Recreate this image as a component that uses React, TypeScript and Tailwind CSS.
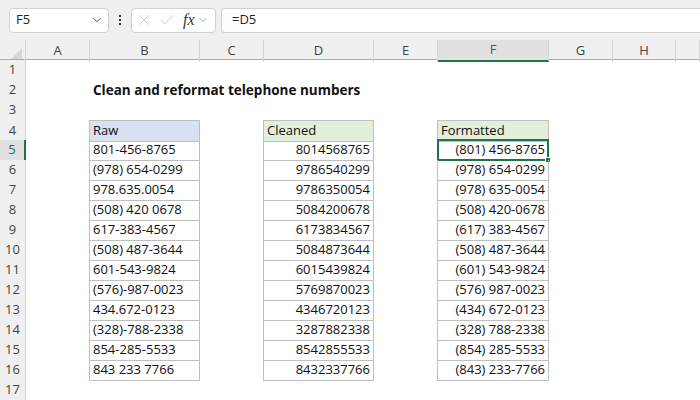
import type { ReactNode } from "react";
import { Check, ChevronDown, X } from "lucide-react";

const raw = [
  "801-456-8765",
  "(978) 654-0299",
  "978.635.0054",
  "(508) 420 0678",
  "617-383-4567",
  "(508) 487-3644",
  "601-543-9824",
  "(576)-987-0023",
  "434.672-0123",
  "(328)-788-2338",
  "854-285-5533",
  "843 233 7766",
];

const clean = (s: string) => s.replace(/\D/g, "");
const format = (s: string) => {
  const d = clean(s);
  return `(${d.slice(0, 3)}) ${d.slice(3, 6)}-${d.slice(6)}`;
};

const cols = ["A", "B", "C", "D", "E", "F", "G", "H", ""];
const gridCols =
  "grid grid-cols-[26px_64px_110px_64px_110px_64px_111px_64px_63px_1fr]";

function TableCell({
  row,
  value,
  align,
  head,
  children,
}: {
  row: number;
  value: string;
  align: "left" | "right";
  head: string;
  children?: ReactNode;
}) {
  const isHead = row === 4;
  return (
    <div
      className={`relative -ml-px flex items-center border-x border-b border-[#bfbfbf] px-[3px] ${
        isHead ? `border-t ${head}` : ""
      } ${align === "right" && !isHead ? "justify-end" : ""}`}
    >
      {value}
      {children}
    </div>
  );
}

export default function App() {
  const rows = Array.from({ length: 17 }, (_, i) => i + 1);
  return (
    <div className="h-[400px] w-[700px] overflow-hidden bg-white font-['Open_Sans',sans-serif] text-[13px] text-[#111]">
      {/* formula bar */}
      <div className="flex h-10 items-center bg-[#f0f0f0] pl-[9px]">
        <div className="flex h-[25px] w-[100px] items-center justify-between rounded-[4px] border border-[#d1d1d1] bg-white pl-[6px] pr-[4px] text-[#222]">
          <span>F5</span>
          <ChevronDown size={14} strokeWidth={1.6} className="text-[#444]" />
        </div>
        <div className="flex w-[22px] flex-col items-center gap-[2px]">
          <span className="h-[2px] w-[2px] bg-[#333]" />
          <span className="h-[2px] w-[2px] bg-[#333]" />
          <span className="h-[2px] w-[2px] bg-[#333]" />
        </div>
        <div className="flex h-[25px] w-[85px] items-center rounded-[4px] border border-[#d1d1d1] bg-white pl-[3px] text-[#c4c4c4]">
          <X size={18} strokeWidth={1.1} />
          <Check size={18} strokeWidth={1.1} className="ml-[5px]" />
          <span className="ml-[7px] font-['Liberation_Serif',serif] text-[16px] italic text-[#333]">
            fx
          </span>
          <ChevronDown size={12} strokeWidth={1.5} className="ml-[2px] text-[#888]" />
        </div>
        <div className="ml-[5px] flex h-[25px] flex-1 items-center rounded-l-[4px] border border-r-0 border-[#d1d1d1] bg-white pl-[10px] text-[#222]">
          =D5
        </div>
      </div>

      {/* column headers */}
      <div className={`${gridCols} h-5 border-b border-[#ababab] bg-[#f0f0f0] text-[#444]`}>
        <div className="relative border-r border-[#d4d4d4]">
          <div className="absolute bottom-[3px] right-[3px] h-0 w-0 border-b-[11px] border-l-[11px] border-b-[#d8d8d8] border-l-transparent" />
        </div>
        {cols.map((c, i) => (
          <div
            key={i}
            className={`flex items-center justify-center border-r border-[#d4d4d4] ${
              c === "F"
                ? "border-b-2 border-b-[#217346] bg-[#e1e1e1] text-[#217346]"
                : ""
            }`}
          >
            {c}
          </div>
        ))}
      </div>

      {/* body */}
      {rows.map((r) => {
        const d = r >= 5 && r <= 16 ? r - 5 : -1;
        const inTable = r >= 4 && r <= 16;
        return (
          <div key={r} className={`${gridCols} h-5`}>
            <div
              className={`flex items-center justify-center border-b border-r border-[#d4d4d4] ${
                r === 5
                  ? "border-r-2 border-r-[#217346] bg-[#e1e1e1] text-[#217346]"
                  : "bg-[#f0f0f0] text-[#444]"
              }`}
            >
              {r}
            </div>
            <div />
            {inTable ? (
              <TableCell
                row={r}
                value={r === 4 ? "Raw" : raw[d]}
                align="left"
                head="bg-[#d9e1f2]"
              />
            ) : (
              <div className="flex items-center whitespace-nowrap px-[3px]">
                {r === 2 && (
                  <span className="text-[13.5px] font-bold">
                    Clean and reformat telephone numbers
                  </span>
                )}
              </div>
            )}
            <div />
            {inTable ? (
              <TableCell
                row={r}
                value={r === 4 ? "Cleaned" : clean(raw[d])}
                align="right"
                head="bg-[#e2efda]"
              />
            ) : (
              <div />
            )}
            <div />
            {inTable ? (
              <TableCell
                row={r}
                value={r === 4 ? "Formatted" : format(raw[d])}
                align="right"
                head="bg-[#e2efda]"
              >
                {r === 5 && (
                  <div className="absolute -bottom-px -left-px -right-px -top-px border-2 border-[#217346]">
                    <span className="absolute -bottom-[4px] -right-[4px] h-[6px] w-[6px] border border-white bg-[#217346]" />
                  </div>
                )}
              </TableCell>
            ) : (
              <div />
            )}
            <div />
            <div />
            <div />
          </div>
        );
      })}
    </div>
  );
}
